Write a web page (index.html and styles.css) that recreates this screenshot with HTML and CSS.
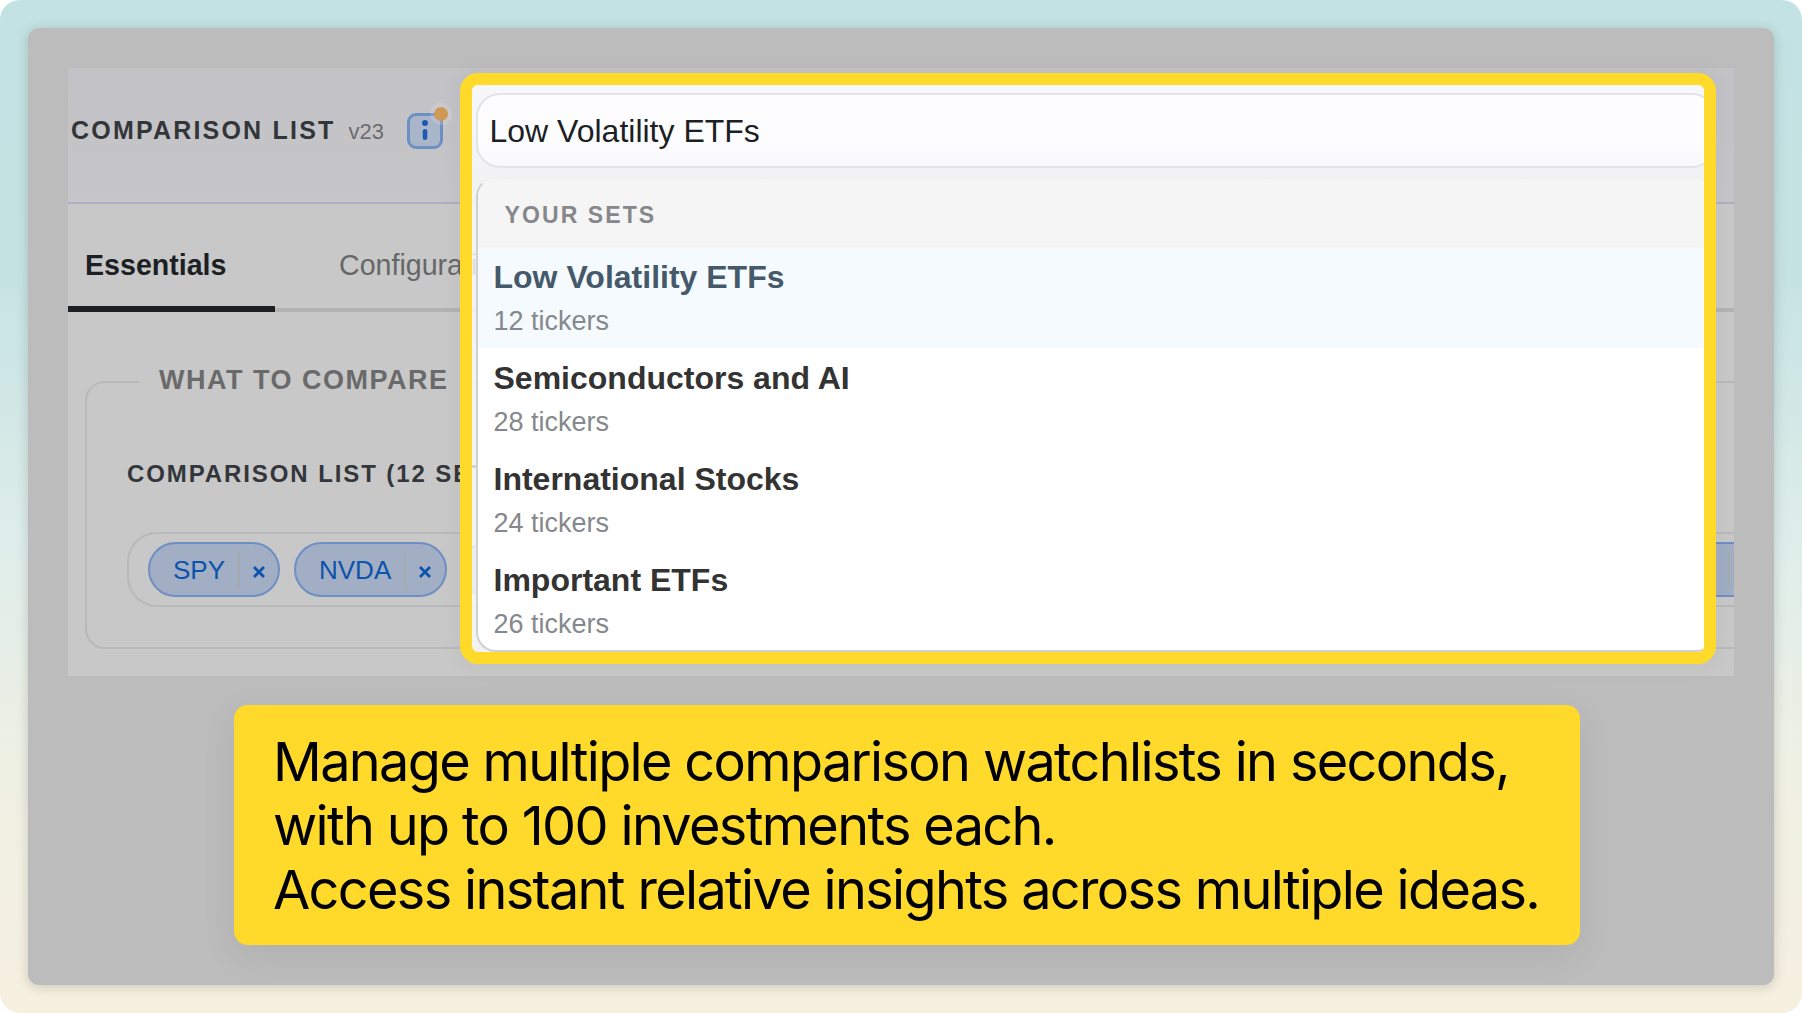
FILE: index.html
```html
<!DOCTYPE html>
<html lang="en">
<head>
<meta charset="utf-8">
<title>Comparison List</title>
<link rel="stylesheet" href="styles.css">
</head>
<body>
<div class="page">
  <main class="panel">
    <section class="app">
      <header class="app-header">
        <h1 class="app-title">COMPARISON LIST</h1>
        <span class="app-version">v23</span>
        <span class="info">
          <svg class="info-glyph" viewBox="0 0 10 24" aria-hidden="true"><circle cx="5" cy="4" r="3"/><rect x="2.7" y="10" width="4.6" height="11" rx="2.3"/></svg>
          <span class="info-dot"></span>
        </span>
      </header>
      <nav class="tabs">
        <span class="tab tab-active">Essentials</span>
        <span class="tab">Configuration</span>
      </nav>
      <div class="content">
        <fieldset class="group">
          <legend class="group-title">WHAT TO COMPARE</legend>
          <div class="list-label">COMPARISON LIST (12 SETS)</div>
          <div class="chips">
            <span class="chip"><span>SPY</span><i class="chip-sep"></i><svg class="chip-x" viewBox="0 0 12 12"><path d="M1 1l10 10M11 1L1 11"/></svg></span>
            <span class="chip"><span>NVDA</span><i class="chip-sep"></i><svg class="chip-x" viewBox="0 0 12 12"><path d="M1 1l10 10M11 1L1 11"/></svg></span>
            <span class="chip"><span>QQQ</span><i class="chip-sep"></i><svg class="chip-x" viewBox="0 0 12 12"><path d="M1 1l10 10M11 1L1 11"/></svg></span>
            <span class="chip"><span>VTI</span><i class="chip-sep"></i><svg class="chip-x" viewBox="0 0 12 12"><path d="M1 1l10 10M11 1L1 11"/></svg></span>
            <span class="chip"><span>GLD</span><i class="chip-sep"></i><svg class="chip-x" viewBox="0 0 12 12"><path d="M1 1l10 10M11 1L1 11"/></svg></span>
            <span class="chip"><span>XLK</span><i class="chip-sep"></i><svg class="chip-x" viewBox="0 0 12 12"><path d="M1 1l10 10M11 1L1 11"/></svg></span>
            <span class="chip"><span>SMH</span><i class="chip-sep"></i><svg class="chip-x" viewBox="0 0 12 12"><path d="M1 1l10 10M11 1L1 11"/></svg></span>
            <span class="chip"><span>IWM</span><i class="chip-sep"></i><svg class="chip-x" viewBox="0 0 12 12"><path d="M1 1l10 10M11 1L1 11"/></svg></span>
            <span class="chip"><span>AMD</span><i class="chip-sep"></i><svg class="chip-x" viewBox="0 0 12 12"><path d="M1 1l10 10M11 1L1 11"/></svg></span>
            <span class="chip"><span>DIA</span><i class="chip-sep"></i><svg class="chip-x" viewBox="0 0 12 12"><path d="M1 1l10 10M11 1L1 11"/></svg></span>
            <span class="chip"><span>VWO</span><i class="chip-sep"></i><svg class="chip-x" viewBox="0 0 12 12"><path d="M1 1l10 10M11 1L1 11"/></svg></span>
          </div>
        </fieldset>
      </div>
    </section>

    <p class="caption">Manage multiple comparison watchlists in seconds,<br>with up to 100 investments each.<br>Access instant relative insights across multiple ideas.</p>

    <div class="spotlight">
      <div class="spot-top">
        <div class="search">Low Volatility ETFs</div>
      </div>
      <div class="menu">
        <div class="menu-head">YOUR SETS</div>
        <div class="menu-item menu-item-active">
          <div class="item-name">Low Volatility ETFs</div>
          <div class="item-count">12 tickers</div>
        </div>
        <div class="menu-item">
          <div class="item-name">Semiconductors and AI</div>
          <div class="item-count">28 tickers</div>
        </div>
        <div class="menu-item">
          <div class="item-name">International Stocks</div>
          <div class="item-count">24 tickers</div>
        </div>
        <div class="menu-item">
          <div class="item-name">Important ETFs</div>
          <div class="item-count">26 tickers</div>
        </div>
      </div>
    </div>
  </main>
</div>
</body>
</html>
```
FILE: styles.css
```css
* { box-sizing: border-box; }
html, body { margin: 0; padding: 0; background: #fff; }
body { font-family: "Liberation Sans", Arial, sans-serif; width: 1802px; height: 1013px; overflow: hidden; }

.page {
  width: 1802px;
  height: 1013px;
  padding: 28px;
  border-radius: 20px;
  background: linear-gradient(180deg, #c3e2e3 0%, #c6e3e3 28%, #e0eeea 55%, #eef0e4 75%, #f6f0e0 100%);
}

.panel {
  position: relative;
  width: 1746px;
  height: 957px;
  padding: 40px 40px 0;
  border-radius: 11px;
  background: #bcbcbc;
  box-shadow: 0 2px 12px rgba(60, 60, 60, .22);
}

.app {
  width: 1666px;
  height: 608px;
  overflow: hidden;
  background: #c8c8c8;
}

.app-header {
  display: flex;
  align-items: baseline;
  height: 136px;
  padding: 47px 0 0 3px;
  border-bottom: 2px solid #aeaec8;
  background: linear-gradient(180deg, #c2c2c7, #c6c6c8);
}
.app-title {
  margin: 0;
  font-size: 25px;
  line-height: 30px;
  font-weight: 700;
  letter-spacing: 2.2px;
  color: #333639;
}
.app-version { margin-left: 13px; font-size: 22px; line-height: 30px; color: #6c6c70; }
.info {
  position: relative;
  align-self: flex-start;
  display: flex;
  align-items: center;
  justify-content: center;
  width: 36px;
  height: 36px;
  margin: -2px 0 0 23px;
  border: 3px solid #6e8fc4;
  border-radius: 9px;
  background: #a9b5c9;
}
.info-glyph { width: 10px; height: 24px; fill: #1d5bb3; }
.info-dot {
  position: absolute;
  top: -9px;
  right: -8px;
  width: 14px;
  height: 14px;
  border-radius: 50%;
  background: #cf9a56;
  box-shadow: 0 0 0 4px rgba(255, 255, 255, .14);
}

.tabs {
  display: flex;
  height: 108px;
  border-bottom: 4px solid #b3b3b3;
  background: #c8c8c8;
}
.tab {
  display: block;
  width: 207px;
  height: 108px;
  padding: 44px 0 0 17px;
  font-size: 28.6px;
  line-height: 34px;
  color: #666769;
}
.tab + .tab { padding-left: 64px; width: 400px; }
.tab-active { font-weight: 700; color: #1c1f24; border-bottom: 6px solid #1c1f24; }

.content { padding: 50.2px 0 0 17px; }

.group {
  min-width: 0;
  margin: 0 -40px 0 0;
  padding: 0 0 40px 40px;
  border: 2px solid #b9b9b9;
  border-radius: 20px;
}
.group-title {
  margin-left: 12px;
  padding: 0 12px 3px 20px;
  font-size: 27px;
  line-height: 36px;
  font-weight: 700;
  letter-spacing: 1.5px;
  color: #6a6a6a;
}
.list-label {
  margin-top: 57.5px;
  font-size: 24px;
  line-height: 30px;
  font-weight: 700;
  letter-spacing: 1.9px;
  color: #33363a;
  white-space: nowrap;
}
.chips {
  display: flex;
  gap: 13.6px;
  height: 75px;
  margin-top: 43.5px;
  padding: 8px 0 0 19px;
  border: 2px solid #b9b9b9;
  border-radius: 30px;
}
.chip {
  display: flex;
  flex: none;
  align-items: center;
  height: 55px;
  padding: 2px 0 0 23px;
  border: 2px solid #6e8fc4;
  border-radius: 28px;
  background: #a1aec3;
  font-size: 26px;
  color: #0b53ad;
}
.chip-sep { display: block; width: 2px; height: 36px; margin: -2px 0 0 13px; background: #a5a9b0; }
.chip-x { width: 12px; height: 12px; margin: 2px 13.2px 0 13.2px; fill: none; stroke: #0b53ad; stroke-width: 2.8; }

.caption {
  width: 1346px;
  height: 240px;
  margin: 29px 0 0 166px;
  padding: 25px 0 0 39px;
  border-radius: 14px;
  background: #ffda2b;
  box-shadow: 0 10px 36px rgba(0, 0, 0, .07);
  font-family: Inter, "Liberation Sans", sans-serif;
  font-size: 54px;
  line-height: 64px;
  letter-spacing: -1.65px;
  color: #000;
  white-space: nowrap;
}

.spotlight {
  position: absolute;
  left: 432px;
  top: 45px;
  width: 1256px;
  height: 591px;
  padding: 0;
  overflow: hidden;
  border: 12px solid #ffda2b;
  border-radius: 18px;
  background: rgba(255, 255, 255, .78);
  box-shadow: 0 0 26px rgba(0, 0, 0, .05);
}
.spot-top {
  height: 92px;
  padding: 8px 0 0 3.5px;
  background: linear-gradient(180deg, #f8f8fc, #f2f2f6);
}
.search {
  width: 1240px;
  height: 75px;
  padding-left: 12px;
  border: 2px solid #e3e3e8;
  border-radius: 24px;
  background: linear-gradient(180deg, #fdfdff, #fdfdff 70%, #f8f8fb);
  font-size: 32px;
  line-height: 73px;
  color: #1c1f24;
}
.menu {
  width: 1240px;
  height: 475px;
  margin-left: 3.5px;
  overflow: hidden;
  border: 2px solid #d0d0d3;
  border-top-color: #f0f0f2;
  border-radius: 20px;
  background: #fff;
}
.menu-head {
  height: 68px;
  padding: 0 0 0 27px;
  background: #f5f5f5;
  font-size: 23px;
  line-height: 73px;
  font-weight: 700;
  letter-spacing: 2.1px;
  color: #85878a;
}
.menu-item { height: 101px; padding: 10px 0 0 16px; }
.menu-item-active { background: #f4fafd; }
.item-name { font-size: 32px; line-height: 40px; font-weight: 700; color: #333; }
.menu-item-active .item-name { color: #45596a; }
.item-count { margin-top: 5.5px; font-size: 27px; line-height: 36px; color: #85888c; }
```
